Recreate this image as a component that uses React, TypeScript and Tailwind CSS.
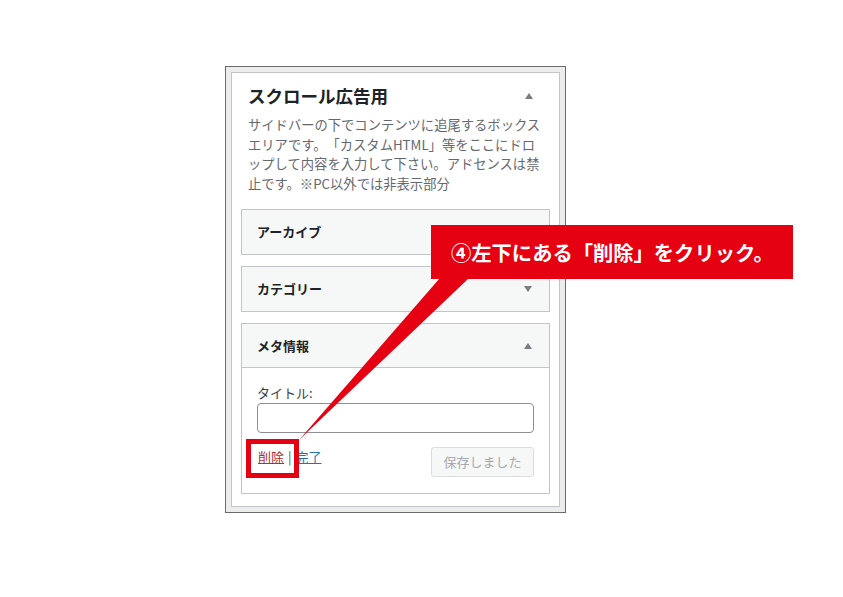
const jp = "font-['Noto_Sans_CJK_JP','Noto_Sans',sans-serif] [text-spacing-trim:space-all]";

function Caret({ up }: { up: boolean }) {
  return (
    <svg width="8" height="6" viewBox="0 0 8 6" className="shrink-0">
      <polygon points={up ? "4,0 8,6 0,6" : "0,0 8,0 4,6"} fill="#787c82" />
    </svg>
  );
}

function PanelHeader({ title, up, divided }: { title: string; up: boolean; divided?: boolean }) {
  return (
    <div
      className={`h-[44px] flex items-center justify-between pl-[15px] pr-[17px] ${
        divided ? "border-b border-[#c3c4c7]" : ""
      }`}
    >
      <span className="text-[13px] font-semibold text-[#1d2327]">{title}</span>
      <Caret up={up} />
    </div>
  );
}

export default function App() {
  return (
    <div className={`relative w-[843px] h-[597px] bg-white overflow-hidden ${jp}`}>
      <div className="pt-[66px] pl-[225px]">
        <div className="w-[341px] border border-[#6b6b6b] bg-[#ececec] p-[5px]">
          <div className="border border-[#c3c4c7] bg-white pb-[12px]">
            {/* widget area title */}
            <div className="flex items-center justify-between pt-[11px] pl-[16px] pr-[26px]">
              <h2 className="text-[17.5px] leading-[24px] font-bold text-[#1d2327]">
                スクロール広告用
              </h2>
              <Caret up />
            </div>
            <p className="mt-[7px] pl-[16px] text-[13.3px] leading-[19.5px] text-[#646970] whitespace-nowrap">
              <span className="block">サイドバーの下でコンテンツに追尾するボックス</span>
              <span className="block">エリアです。「カスタムHTML」等をここにドロ</span>
              <span className="block">ップして内容を入力して下さい。アドセンスは禁</span>
              <span className="block">止です。※PC以外では非表示部分</span>
            </p>

            <div className="mt-[16px] px-[9px] flex flex-col gap-[11px]">
              <div className="border border-[#c3c4c7] bg-[#f6f7f7]">
                <PanelHeader title="アーカイブ" up={false} />
              </div>
              <div className="border border-[#c3c4c7] bg-[#f6f7f7]">
                <PanelHeader title="カテゴリー" up={false} />
              </div>
              <div className="border border-[#c3c4c7] bg-white">
                <div className="bg-[#f6f7f7]">
                  <PanelHeader title="メタ情報" up divided />
                </div>
                <div className="pt-[15px] pb-[16px] pl-[15px] pr-[15px]">
                  <label className="block text-[13px] leading-[20px] text-[#3c434a]">タイトル:</label>
                  <div className="h-[30px] rounded-[4px] border border-[#8c8f94] bg-white" />
                  <div className="mt-[14px] flex items-start justify-between">
                    <div className="text-[13px] leading-[20px] pl-[1px]">
                      <span className="text-[#b32d2e] underline">削除</span>
                      <span className="text-[#50575e] mx-[4px]">|</span>
                      <span className="text-[#2271b1] underline">完了</span>
                    </div>
                    <div className="h-[30px] w-[103px] rounded-[3px] border border-[#dcdcde] bg-[#f6f7f7] flex items-center justify-center text-[13px] text-[#a7aaad]">
                      保存しました
                    </div>
                  </div>
                </div>
              </div>
            </div>
          </div>
        </div>
      </div>

      {/* annotation: pointer + highlight */}
      <svg className="absolute inset-0 pointer-events-none" width="843" height="597">
        <polygon points="440,278 469,278 299,440" fill="#e50012" />
        <rect x="248.5" y="441.5" width="48" height="34" fill="none" stroke="#e50012" strokeWidth="5" />
      </svg>

      <div className="absolute left-[431px] top-[225px] w-[362px] h-[54px] bg-[#e50012] flex items-center pl-[20px]">
        <span className="text-white font-bold text-[20.3px] leading-none whitespace-nowrap">
          ④左下にある「削除」をクリック。
        </span>
      </div>
    </div>
  );
}
